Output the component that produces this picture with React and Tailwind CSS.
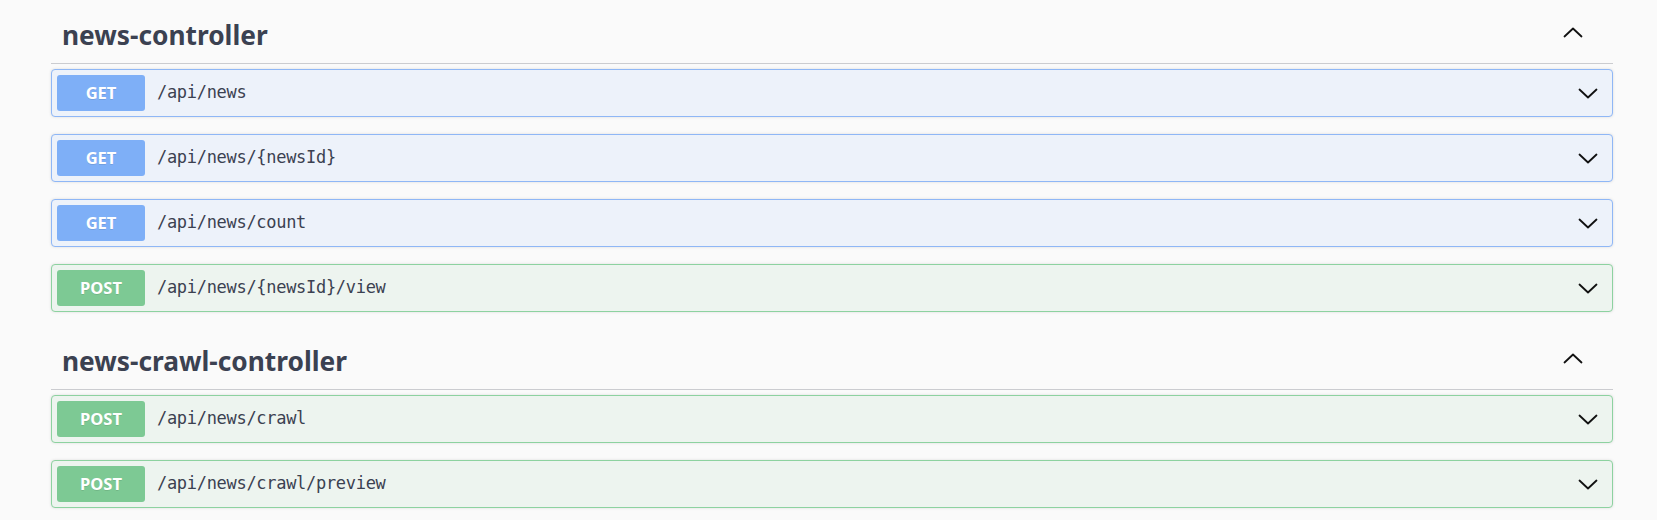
import React from 'react';

const sections = [
  {
    name: 'news-controller',
    ops: [
      { method: 'GET', path: '/api/news' },
      { method: 'GET', path: '/api/news/{newsId}' },
      { method: 'GET', path: '/api/news/count' },
      { method: 'POST', path: '/api/news/{newsId}/view' },
    ],
  },
  {
    name: 'news-crawl-controller',
    ops: [
      { method: 'POST', path: '/api/news/crawl' },
      { method: 'POST', path: '/api/news/crawl/preview' },
    ],
  },
];

const styles = {
  GET: {
    block: 'bg-[#edf2fa] border-[#8fb7f6]',
    badge: 'bg-[#7eaff7]',
  },
  POST: {
    block: 'bg-[#edf4ef] border-[#8dd2a0]',
    badge: 'bg-[#7dc994]',
  },
};

const Chevron = ({ up }) => (
  <svg width="20" height="11" viewBox="0 0 20 11" className="shrink-0">
    <polyline
      points={up ? '1.5,9.5 10,1.5 18.5,9.5' : '1.5,1.5 10,9.5 18.5,1.5'}
      fill="none"
      stroke="#111"
      strokeWidth="1.8"
      strokeLinecap="round"
      strokeLinejoin="round"
    />
  </svg>
);

const Operation = ({ method, path }) => {
  const s = styles[method];
  return (
    <div
      className={`flex items-center h-[48px] border rounded-[4px] shadow-[0_0_3px_rgba(0,0,0,0.12)] ${s.block}`}
    >
      <div
        className={`ml-[5px] w-[88px] h-[36px] rounded-[3px] flex items-center justify-center text-white font-bold text-[16.5px] font-['Noto_Sans',sans-serif] [text-shadow:0_1px_0_rgba(0,0,0,0.1)] ${s.badge}`}
      >
        {method}
      </div>
      <div className="ml-[12px] flex-1 text-[#3b4151] text-[17px] tracking-[-0.3px] font-['DejaVu_Sans_Mono',monospace]">
        {path}
      </div>
      <div className="mr-[14px]">
        <Chevron />
      </div>
    </div>
  );
};

const Section = ({ name, ops }) => (
  <div className="mb-[14px]">
    <div className="flex items-start justify-between border-b border-[#cbccd0] pl-[11px] pt-[17px] pb-[10px]">
      <h3 className="text-[26.3px] leading-[36px] font-bold text-[#3b4151] font-['Noto_Sans',sans-serif]">
        {name}
      </h3>
      <div className="mt-[10px] mr-[30px]">
        <Chevron up />
      </div>
    </div>
    <div className="mt-[5px] flex flex-col gap-[17px]">
      {ops.map((op) => (
        <Operation key={op.path} {...op} />
      ))}
    </div>
  </div>
);

export default function App() {
  return (
    <div className="w-full h-[520px] overflow-hidden bg-[#fafafa] pl-[51px] pr-[44px]">
      {sections.map((sec) => (
        <Section key={sec.name} {...sec} />
      ))}
    </div>
  );
}
